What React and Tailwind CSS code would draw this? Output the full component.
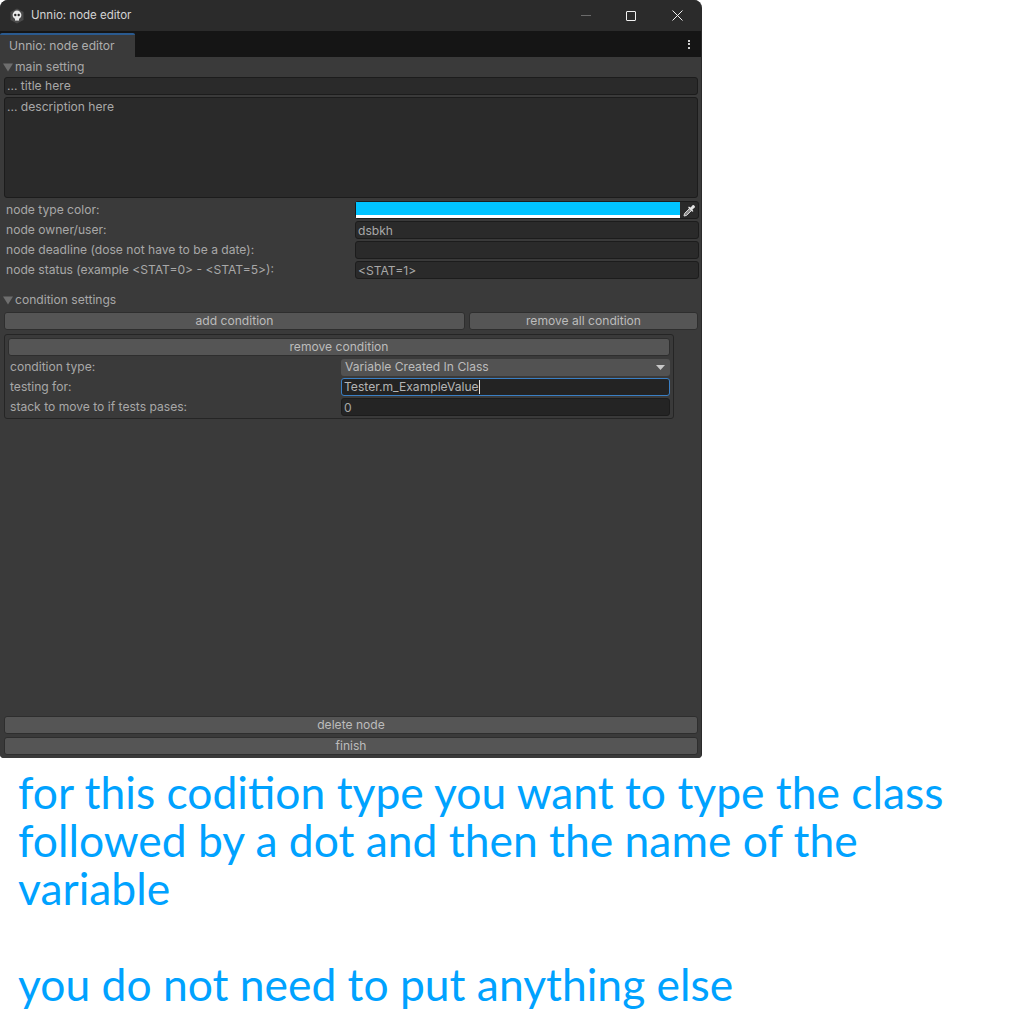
import React from "react";

const Btn = ({ children, className = "" }) => (
  <div className={`h-[18px] flex items-center justify-center rounded-[3px] bg-[#555555] border border-[#2e2e2e] text-[12.1px] text-[#bcbcbc] ${className}`}>
    {children}
  </div>
);

const Field = ({ children, className = "" }) => (
  <div className={`h-[18px] flex items-center px-[2px] pt-[1px] rounded-[3px] bg-[#2a2a2a] border border-[#1c1c1c] text-[12.1px] text-[#a8a8a8] ${className}`}>
    {children}
  </div>
);

const Section = ({ title, className = "" }) => (
  <div className={`flex items-center gap-[2px] h-[20px] text-[12.1px] text-[#a8a8a8] ${className}`}>
    <svg width="10" height="9" viewBox="0 0 10 9" className="ml-[-1px]">
      <path d="M0 0.5H10L5 8.5Z" fill="#6e6e6e" />
    </svg>
    <span>{title}</span>
  </div>
);

const Row = ({ label, children }) => (
  <div className="grid grid-cols-[351px_1fr] h-[18px] items-center mb-[2px] mr-[-1px]">
    <span className="pl-[2px] text-[12.1px] text-[#a8a8a8]">{label}</span>
    {children}
  </div>
);

const CondRow = ({ label, children }) => (
  <div className="grid grid-cols-[333px_1fr] h-[18px] items-center">
    <span className="pl-[2px] text-[12.1px] text-[#a8a8a8]">{label}</span>
    {children}
  </div>
);

const AppIcon = () => (
  <svg width="14" height="16" viewBox="0 0 14 16">
    <path d="M7 0.5L13.5 4V12L7 15.5L0.5 12V4Z" fill="#4a4a4a" />
    <circle cx="7" cy="7" r="4.4" fill="#ececec" />
    <rect x="5" y="10" width="4" height="2.6" fill="#ececec" />
    <circle cx="5.3" cy="7" r="1.2" fill="#2a2a2a" />
    <circle cx="8.7" cy="7" r="1.2" fill="#2a2a2a" />
  </svg>
);

const Eyedropper = () => (
  <svg width="13" height="13" viewBox="0 0 13 13">
    <path d="M1 12L1.6 9.4L6.4 4.6L8.4 6.6L3.6 11.4Z" fill="#8c8c8c" stroke="#d8d8d8" strokeWidth="1" />
    <path d="M5.8 2.6L7.6 3.6L9.6 1.2C10.6 0.3 12.7 2.4 11.8 3.4L9.4 5.4L10.4 7.2L9.2 7.8L5.2 3.8Z" fill="#e4e4e4" />
  </svg>
);

export default function App() {
  return (
    <div className="min-h-screen bg-white font-['Inter','Liberation_Sans',sans-serif]">
      <div className="w-[702px] h-[758px] flex flex-col bg-[#3a3a3a] rounded-t-[8px] rounded-b-[4px] overflow-hidden border-r border-[#2a2a2a]">
        {/* title bar */}
        <div className="h-[31px] flex items-center bg-[#2b2b2b] shrink-0">
          <div className="ml-[10px] w-[14px] flex items-center">
            <AppIcon />
          </div>
          <span className="ml-[7px] pt-[1px] text-[11.5px] text-[#d4d4d4]">Unnio: node editor</span>
          <div className="ml-auto flex items-center">
            <div className="w-[10px] h-px bg-[#6b6b6b] mr-[35px]" />
            <div className="w-[10px] h-[10px] rounded-[1px] border border-[#f0f0f0] mr-[36px]" />
            <svg width="11" height="11" viewBox="0 0 11 11" className="mr-[18px]">
              <path d="M0.5 0.5L10.5 10.5M10.5 0.5L0.5 10.5" stroke="#f0f0f0" strokeWidth="1" />
            </svg>
          </div>
        </div>

        {/* tab bar */}
        <div className="h-[26px] flex items-stretch bg-[#151515] shrink-0">
          <div className="w-[135px] mt-[2px] flex items-center pl-[9px] bg-[#3a3a3a] border-t-2 border-[#2a5a8f] rounded-t-[2px] text-[12.1px] text-[#aeaeae]">
            Unnio: node editor
          </div>
          <div className="ml-auto mr-[11px] flex flex-col justify-center gap-[1.5px]">
            <div className="w-[2px] h-[2px] bg-[#cfcfcf]" />
            <div className="w-[2px] h-[2px] bg-[#cfcfcf]" />
            <div className="w-[2px] h-[2px] bg-[#cfcfcf]" />
          </div>
        </div>

        {/* content */}
        <div className="flex-1 flex flex-col pl-[4px] pr-[3px] bg-[#3a3a3a]">
          <Section title="main setting" />
          <Field>... title here</Field>
          <div className="h-[101px] mt-[2px] px-[2px] rounded-[3px] bg-[#2a2a2a] border border-[#1c1c1c] text-[12.1px] text-[#a8a8a8]">
            ... description here
          </div>

          <div className="mt-[3px]">
            <Row label="node type color:">
              <div className="h-[18px] flex items-stretch rounded-[3px] bg-[#2a2a2a] border border-[#1c1c1c]">
                <div className="flex-1 flex flex-col">
                  <div className="flex-1 bg-[#00c3ff]" />
                  <div className="h-[3px] bg-white" />
                </div>
                <div className="w-[18px] flex items-center justify-center">
                  <Eyedropper />
                </div>
              </div>
            </Row>
            <Row label="node owner/user:">
              <Field>dsbkh</Field>
            </Row>
            <Row label="node deadline (dose not have to be a date):">
              <Field />
            </Row>
            <Row label="node status (example <STAT=0> - <STAT=5>):">
              <Field>{"<STAT=1>"}</Field>
            </Row>
          </div>

          <Section title="condition settings" className="mt-[9px]" />
          <div className="grid grid-cols-[461px_1fr] gap-[4px] mt-[2px]">
            <Btn>add condition</Btn>
            <Btn>remove all condition</Btn>
          </div>

          <div className="w-[670px] h-[85px] mt-[4px] flex flex-col gap-[2px] pl-[3px] pr-[3px] pt-[3px] rounded-[3px] border border-[#252525]">
            <Btn>remove condition</Btn>
            <CondRow label="condition type:">
              <div className="h-[17px] flex items-center justify-between pl-[4px] pr-[5px] rounded-[3px] bg-[#525252] text-[12.1px] text-[#bcbcbc]">
                <span>Variable Created In Class</span>
                <svg width="9" height="5" viewBox="0 0 9 5">
                  <path d="M0 0H9L4.5 5Z" fill="#c8c8c8" />
                </svg>
              </div>
            </CondRow>
            <CondRow label="testing for:">
              <div className="h-[18px] flex items-center px-[2px] rounded-[3px] bg-[#232323] border border-[#3a7fc4] text-[12.1px] text-[#b4b4b4]">
                <span>Tester.m_ExampleValue</span>
                <div className="w-px h-[14px] bg-[#e0e0e0]" />
              </div>
            </CondRow>
            <CondRow label="stack to move to if tests pases:">
              <Field className="bg-[#242424]">0</Field>
            </CondRow>
          </div>

          <div className="mt-auto mb-[3px] flex flex-col gap-[3px]">
            <Btn>delete node</Btn>
            <Btn>finish</Btn>
          </div>
        </div>
      </div>

      {/* note under the screenshot */}
      <div className="pt-[10px] pl-[18px] w-[1000px] font-['Lato','Open_Sans',sans-serif] text-[44.4px] leading-[48px] text-[#00a2ff]">
        <p>for this codition type you want to type the class</p>
        <p>followed by a dot and then the name of the</p>
        <p>variable</p>
        <p className="mt-[48px]">you do not need to put anything else</p>
      </div>
    </div>
  );
}
